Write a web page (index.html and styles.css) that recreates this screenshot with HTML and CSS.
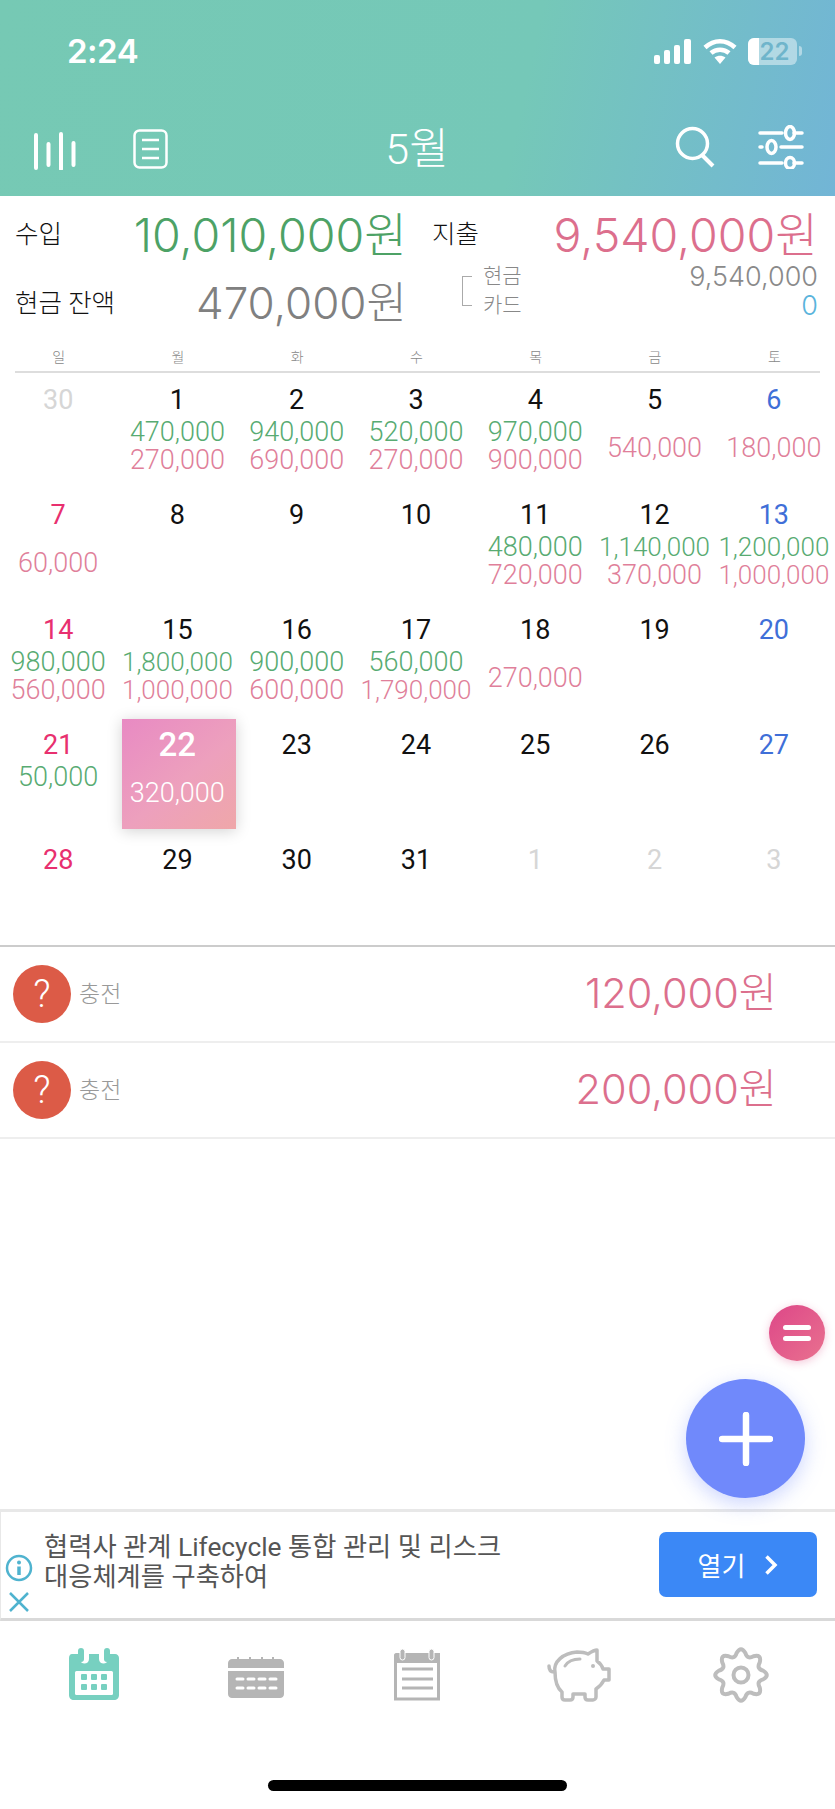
FILE: index.html
```html
<!DOCTYPE html>
<html lang="ko">
<head>
<meta charset="utf-8">
<title>가계부</title>
<link rel="stylesheet" href="styles.css">
</head>
<body>
<div class="app">
  <header class="top">
    <div class="status">
      <span class="time">2:24</span>
      <div class="status-icons">
        <svg class="sig" width="37" height="25" viewBox="0 0 37 25"><rect x="0" y="16" width="6" height="9" rx="2"/><rect x="10" y="11" width="6" height="14" rx="2"/><rect x="20" y="6" width="6" height="19" rx="2"/><rect x="30" y="0" width="7" height="25" rx="2"/></svg>
        <svg class="wifi" width="34" height="26" viewBox="0 0 34 26"><path d="M2 9.500C11 1 23 1 32 9.500M8 15C13 10.500 21 10.500 26 15" fill="none" stroke="#fff" stroke-width="4.500"/><path d="M11.500 19.500C15 17 19 17 22.500 19.500L17 26Z" fill="#fff"/></svg>
        <div class="batt"><div class="batt-fill"></div><span class="batt-text">22</span></div><div class="batt-nub"></div>
      </div>
    </div>
    <nav class="nav">
      <div class="nav-side">
        <svg class="nav-bars" width="44" height="38" viewBox="0 0 44 38"><path d="M3 3V36M15.500 12V33M28 2V37M40.500 11V33" fill="none" stroke="#fff" stroke-width="4" stroke-linecap="round"/></svg>
        <svg class="nav-doc" width="35" height="40" viewBox="0 0 35 40"><rect x="1.500" y="1.500" width="32" height="37" rx="5" fill="none" stroke="#fff" stroke-width="2.500"/><path d="M9 11H26M9 20H26M9 29H26" stroke="#fff" stroke-width="2.500"/></svg>
      </div>
      <h1 class="month">5월</h1>
      <div class="nav-side">
        <svg class="nav-search" width="42" height="42" viewBox="0 0 42 42"><circle cx="17.500" cy="17.500" r="15" fill="none" stroke="#fff" stroke-width="3.500"/><path d="M27 29L38 40" stroke="#fff" stroke-width="4"/></svg>
        <svg class="nav-sliders" width="46" height="44" viewBox="0 0 46 44" fill="none" stroke="#fff" stroke-width="3.500" stroke-linecap="round"><path d="M2 8H24M36 8H44M2 22H4M23 22H44M2 38H24M36 38H44"/><ellipse cx="32" cy="8" rx="4.500" ry="6.500"/><ellipse cx="13.500" cy="22" rx="4.500" ry="6.500"/><ellipse cx="32" cy="38" rx="4.500" ry="5.500"/></svg>
      </div>
    </nav>
  </header>

  <section class="summary">
    <div class="sum-col">
      <div class="sum-row sum-first"><span class="label">수입</span><span class="big green">10,010,000원</span></div>
      <div class="sum-row"><span class="label">현금 잔액</span><span class="big gray">470,000원</span></div>
    </div>
    <div class="sum-col">
      <div class="sum-row sum-first"><span class="label">지출</span><span class="big pink">9,540,000원</span></div>
      <div class="breakdown">
        <div class="bracket"></div>
        <div class="bd-names"><span>현금</span><span>카드</span></div>
        <div class="bd-vals"><span>9,540,000</span><span class="blue">0</span></div>
      </div>
    </div>
  </section>

  <div class="weekdays"><span>일</span><span>월</span><span>화</span><span>수</span><span>목</span><span>금</span><span>토</span></div>
  <div class="week-rule"></div>

  <section class="cal">
    <div class="cell"><b class="num mute">30</b></div>
    <div class="cell"><b class="num">1</b><div class="vals"><span class="g">470,000</span><span class="p">270,000</span></div></div>
    <div class="cell"><b class="num">2</b><div class="vals"><span class="g">940,000</span><span class="p">690,000</span></div></div>
    <div class="cell"><b class="num">3</b><div class="vals"><span class="g">520,000</span><span class="p">270,000</span></div></div>
    <div class="cell"><b class="num">4</b><div class="vals"><span class="g">970,000</span><span class="p">900,000</span></div></div>
    <div class="cell"><b class="num">5</b><div class="vals mid"><span class="p">540,000</span></div></div>
    <div class="cell"><b class="num sat">6</b><div class="vals mid"><span class="p">180,000</span></div></div>

    <div class="cell"><b class="num sun">7</b><div class="vals mid"><span class="p">60,000</span></div></div>
    <div class="cell"><b class="num">8</b></div>
    <div class="cell"><b class="num">9</b></div>
    <div class="cell"><b class="num">10</b></div>
    <div class="cell"><b class="num">11</b><div class="vals"><span class="g">480,000</span><span class="p">720,000</span></div></div>
    <div class="cell"><b class="num">12</b><div class="vals"><span class="g long">1,140,000</span><span class="p">370,000</span></div></div>
    <div class="cell"><b class="num sat">13</b><div class="vals"><span class="g long">1,200,000</span><span class="p long">1,000,000</span></div></div>

    <div class="cell"><b class="num sun">14</b><div class="vals"><span class="g">980,000</span><span class="p">560,000</span></div></div>
    <div class="cell"><b class="num">15</b><div class="vals"><span class="g long">1,800,000</span><span class="p long">1,000,000</span></div></div>
    <div class="cell"><b class="num">16</b><div class="vals"><span class="g">900,000</span><span class="p">600,000</span></div></div>
    <div class="cell"><b class="num">17</b><div class="vals"><span class="g">560,000</span><span class="p long">1,790,000</span></div></div>
    <div class="cell"><b class="num">18</b><div class="vals mid"><span class="p">270,000</span></div></div>
    <div class="cell"><b class="num">19</b></div>
    <div class="cell"><b class="num sat">20</b></div>

    <div class="cell"><b class="num sun">21</b><div class="vals"><span class="g">50,000</span></div></div>
    <div class="cell today"><b class="num">22</b><div class="vals mid"><span>320,000</span></div></div>
    <div class="cell"><b class="num">23</b></div>
    <div class="cell"><b class="num">24</b></div>
    <div class="cell"><b class="num">25</b></div>
    <div class="cell"><b class="num">26</b></div>
    <div class="cell"><b class="num sat">27</b></div>

    <div class="cell"><b class="num sun">28</b></div>
    <div class="cell"><b class="num">29</b></div>
    <div class="cell"><b class="num">30</b></div>
    <div class="cell"><b class="num">31</b></div>
    <div class="cell"><b class="num mute">1</b></div>
    <div class="cell"><b class="num mute">2</b></div>
    <div class="cell"><b class="num mute">3</b></div>
  </section>

  <section class="list">
    <div class="item"><div class="qmark">?</div><span class="item-name">충전</span><span class="item-amt">120,000원</span></div>
    <div class="item"><div class="qmark">?</div><span class="item-name">충전</span><span class="item-amt">200,000원</span></div>
  </section>

  <div class="spacer"></div>

  <section class="ad">
    <div class="ad-marks">
      <svg width="28" height="28" viewBox="0 0 28 28"><circle cx="14" cy="14" r="12" fill="none" stroke="#4fb3cf" stroke-width="2.500"/><circle cx="14" cy="8.500" r="2" fill="#4fb3cf"/><path d="M14 12.500V21" stroke="#4fb3cf" stroke-width="3.500"/></svg>
      <svg width="22" height="22" viewBox="0 0 22 22"><path d="M2 2L20 20M20 2L2 20" stroke="#4fb3cf" stroke-width="2.500"/></svg>
    </div>
    <p class="ad-text">협력사 관계 Lifecycle 통합 관리 및 리스크<br>대응체계를 구축하여</p>
    <div class="ad-btn"><span>열기</span><svg width="14" height="22" viewBox="0 0 14 22"><path d="M2.500 2.500L11 11L2.500 19.500" fill="none" stroke="#fff" stroke-width="3.500"/></svg></div>
  </section>

  <footer class="tabbar">
    <div class="tabs">
      <svg class="tab" width="50" height="54" viewBox="0 0 50 54"><path fill="#77d0c0" d="M3 7H11V12C11 18 20 18 20 12V7H30V12C30 18 39 18 39 12V7H46C48.500 7 50 9 50 11V48C50 51 48 53 45 53H5C2 53 0 51 0 48V11C0 9 1 7 3 7Z"/><rect x="9" y="1" width="6" height="14" rx="3" fill="#77d0c0"/><rect x="35" y="1" width="6" height="14" rx="3" fill="#77d0c0"/><rect x="6" y="24" width="38" height="24" rx="1.500" fill="#fff"/><g fill="#77d0c0"><rect x="12" y="27" width="6" height="6" rx="1"/><rect x="22" y="27" width="6" height="6" rx="1"/><rect x="32" y="27" width="6" height="6" rx="1"/><rect x="12" y="37" width="6" height="6" rx="1"/><rect x="22" y="37" width="6" height="6" rx="1"/><rect x="32" y="37" width="6" height="6" rx="1"/></g></svg>
      <svg class="tab tab-wide" width="56" height="42" viewBox="0 0 56 42"><path fill="#b5b5b5" d="M4 2H52C54 2 56 4 56 6V11H0V6C0 4 2 2 4 2ZM0 14H56V37C56 39.500 54 41 52 41H4C2 41 0 39.500 0 37Z"/><path d="M10 0V3M22 0V3M34 0V3M45 0V3" stroke="#b5b5b5" stroke-width="2"/><path d="M9 22H15M20 22H26M31 22H37M42 22H48M9 31H15M20 31H26M31 31H37M42 31H48" stroke="#fff" stroke-width="3" stroke-linecap="round"/></svg>
      <svg class="tab tab-note" width="46" height="52" viewBox="0 0 46 52"><path fill="#b5b5b5" d="M2 4H46V14H0V6C0 5 1 4 2 4Z"/><path d="M1.500 8V50H44.500V8" fill="none" stroke="#b5b5b5" stroke-width="3"/><path d="M8 20H39M8 30H39M8 39H39" stroke="#b5b5b5" stroke-width="3"/><rect x="6" y="0" width="5" height="11" rx="2.500" fill="#b5b5b5" stroke="#fff"/><rect x="35" y="0" width="5" height="11" rx="2.500" fill="#b5b5b5" stroke="#fff"/></svg>
      <svg class="tab" width="64" height="56" viewBox="0 0 64 56"><path fill="none" stroke="#bdbdbd" stroke-width="3.500" stroke-linejoin="round" stroke-linecap="round" d="M2 19C2 23 4 25 7 25M8 25C6 15 16 6 30 5C35 5 39 6 41 7C44 5 47 3 50 3V14C53 16 55 19 56 22H62V33H57C55 37 52 40 49 42V50C49 52 47 53 46 53H41C39 53 38 52 38 50V47H26V50C26 52 25 53 23 53H18C16 53 15 52 15 50V45C9 40 8 32 8 25Z"/><path d="M18 19C21 14 27 12 33 12" fill="none" stroke="#bdbdbd" stroke-width="3" stroke-linecap="round"/><circle cx="46" cy="19" r="2" fill="#bdbdbd"/></svg>
      <svg class="tab" width="56" height="56" viewBox="0 0 56 56"><path fill="none" stroke="#bdbdbd" stroke-width="4" d="M50.070 23.610Q57.500 28 50.070 32.390Q43.240 34.310 46.710 40.500Q48.860 48.860 40.500 46.710Q34.310 43.240 32.390 50.070Q28 57.500 23.610 50.070Q21.690 43.240 15.500 46.710Q7.140 48.860 9.290 40.500Q12.760 34.310 5.930 32.390Q-1.500 28 5.930 23.610Q12.760 21.690 9.290 15.500Q7.140 7.140 15.500 9.290Q21.690 12.760 23.610 5.930Q28 -1.500 32.390 5.930Q34.310 12.760 40.500 9.290Q48.860 7.140 46.710 15.500Q43.240 21.690 50.070 23.610Z"/><circle cx="28" cy="28" r="7.500" fill="none" stroke="#bdbdbd" stroke-width="4"/></svg>
    </div>
    <div class="home"></div>
  </footer>

  <button class="fab-eq" aria-label="합계"><span></span><span></span></button>
  <button class="fab-add" aria-label="추가"><svg width="54" height="54" viewBox="0 0 54 54"><path d="M27 3V51M3 27H51" stroke="#fff" stroke-width="6.500" stroke-linecap="round"/></svg></button>
</div>
</body>
</html>
```
FILE: styles.css
```css
* { box-sizing: border-box; }
html, body { margin: 0; padding: 0; background: #fff; }
body { font-family: Roboto, "Noto Sans CJK KR", sans-serif; font-weight: 300; color: #111; }
.app { position: relative; width: 835px; height: 1809px; overflow: hidden; display: flex; flex-direction: column; background: #fff; }

.top { height: 196px; flex: none; background: linear-gradient(102deg, #76c9b4 0%, #75c8b8 62%, #72b5d6 100%); color: #fff; }
.status { height: 106px; padding: 36px 33px 0 67px; display: flex; justify-content: space-between; align-items: flex-start; }
.time { font-family: Inter, sans-serif; font-weight: 600; font-size: 33px; line-height: 30px; letter-spacing: -0.5px; }
.status-icons { display: flex; align-items: flex-start; padding-top: 2px; }
.sig { fill: #fff; margin-right: 12px; margin-top: 1px; }
.wifi { margin-right: 11px; }
.batt { position: relative; width: 49px; height: 27px; border-radius: 6px; background: rgba(255,255,255,.45); overflow: hidden; }
.batt-fill { width: 11px; height: 100%; background: #fff; }
.batt-text { position: absolute; inset: 0 0 0 4px; text-align: center; font-family: Inter, sans-serif; font-weight: 600; font-size: 24px; line-height: 27px; color: #6fb5cb; }
.batt-nub { width: 3px; height: 10px; margin-top: 8px; margin-left: 2px; border-radius: 0 3px 3px 0; background: rgba(255,255,255,.45); }

.nav { height: 90px; padding: 0 31px 0 33px; display: flex; justify-content: space-between; align-items: flex-start; }
.nav-side { display: flex; align-items: flex-start; }
.nav-bars { margin-top: 26px; margin-right: 56px; }
.nav-doc { margin-top: 23px; }
.nav-search { margin-top: 20px; margin-right: 41px; }
.nav-sliders { margin-top: 19px; }
.month { margin: 0 9px 0 0; padding-top: 20px; font-weight: 300; font-size: 43px; line-height: 46px; }

.summary { height: 144px; flex: none; padding: 10px 17px 0 15px; display: flex; gap: 25px; }
.sum-col { display: flex; flex-direction: column; }
.sum-col:first-child { width: 392px; }
.sum-col:last-child { flex: 1; }
.sum-row { display: flex; justify-content: space-between; align-items: center; height: 50px; }
.sum-first { margin-bottom: 19px; }
.label { font-size: 25.500px; font-weight: 300; color: #111; }
.big { font-family: Inter, "Noto Sans CJK KR", sans-serif; font-size: 46.500px; white-space: nowrap; }
.green { color: #4da266; }
.pink { color: #dc6f8d; }
.big.gray { color: #808080; font-size: 44px; }
.breakdown { display: flex; margin-top: -13px; height: 62px; }
.bracket { width: 10px; height: 30px; margin: 14px 11px 0 30px; border: 1px solid #aaa; border-right: 0; }
.bd-names, .bd-vals { display: flex; flex-direction: column; }
.bd-names span { font-size: 21px; line-height: 29px; height: 29px; color: #888; }
.bd-vals { flex: 1; align-items: flex-end; }
.bd-vals span { font-family: Inter, sans-serif; font-size: 27px; line-height: 29px; height: 29px; color: #8a8a8a; }
.bd-vals .blue { color: #5ab4dc; }

.weekdays { flex: none; height: 31px; padding-top: 9px; margin-left: -1px; width: 835px; display: grid; grid-template-columns: repeat(7, 1fr); }
.weekdays span { text-align: center; font-size: 14px; line-height: 16px; color: #888; }
.week-rule { flex: none; height: 2px; margin: 0 15px; background: #ddd; }

.cal { flex: none; margin-left: -1.500px; width: 835px; height: 572px; display: grid; grid-template-columns: repeat(7, 1fr); grid-auto-rows: 114.900px; }
.cell { display: flex; flex-direction: column; align-items: center; padding-top: 11px; }
.num { font-weight: 400; font-size: 27px; line-height: 32px; color: #111; }
.mute { color: #d6d6d6; }
.sat { color: #3f6fd8; }
.sun { color: #e8306f; }
.vals { display: flex; flex-direction: column; align-items: center; height: 56px; margin-top: 2px; font-size: 27px; line-height: 28px; white-space: nowrap; }
.vals.mid { justify-content: center; padding-top: 4px; }
.long { font-size: 26px; }
.g { color: #58ab72; }
.p { color: #e07f9a; }
.today { align-self: start; height: 110px; width: 114px; margin: 1px 0 0 4px; padding: 10px 3px 0 0; background: linear-gradient(140deg, #e88ac3 0%, #eda0bd 55%, #efa7a9 100%); box-shadow: 0 2px 14px rgba(0,0,0,.18); color: #fff; }
.today .num { color: #fff; font-weight: 500; font-size: 33px; }
.today .vals { color: #fff; }

.list { flex: none; border-top: 2px solid #ccc; }
.item { height: 96px; padding: 0 58px 0 13px; border-bottom: 2px solid #eee; display: flex; align-items: center; }
.qmark { width: 58px; height: 58px; border-radius: 50%; background: #dc5b47; color: #fff; font-size: 38px; line-height: 58px; text-align: center; }
.item-name { margin: 0 0 4px 8px; font-size: 23px; color: #999; }
.item-amt { font-family: Inter, "Noto Sans CJK KR", sans-serif; margin: 0 0 8px auto; font-size: 41.500px; color: #dc6f8d; }

.spacer { flex: 1; }

.ad { flex: none; height: 112px; border-top: 3px solid #e8e8e8; border-bottom: 3px solid #d9d9d9; border-left: 1px solid #e8e8e8; display: flex; padding: 20px 18px 0 3px; }
.ad-marks { width: 40px; flex: none; display: flex; flex-direction: column; align-items: flex-start; gap: 9px; padding-top: 22px; padding-left: 1px; }
.ad-marks svg:last-child { margin-left: 3px; }
.ad-text { margin: 0; font-weight: 400; font-size: 26.300px; line-height: 30px; color: #555; white-space: nowrap; }
.ad-btn { margin-left: auto; width: 158px; height: 65px; border-radius: 7px; background: #3b88f6; color: #fff; display: flex; align-items: center; justify-content: center; gap: 19px; font-size: 26px; font-weight: 400; }

.tabbar { flex: none; height: 188px; }
.tabs { height: 159px; padding: 26px 13px 0; display: grid; grid-template-columns: repeat(5, 1fr); justify-items: center; align-items: start; }
.tab { display: block; }
.tab-wide { margin-top: 10px; }
.tab-note { margin-top: 2px; }
.home { width: 299px; height: 11px; margin: 0 auto; border-radius: 6px; background: #000; }

.fab-eq { position: absolute; left: 769px; top: 1305px; width: 56px; height: 56px; padding: 0; border: 0; border-radius: 50%; background: linear-gradient(135deg, #dd4788, #e9718f); box-shadow: 0 2px 8px rgba(220,70,130,.3); display: flex; flex-direction: column; align-items: center; justify-content: center; gap: 6px; }
.fab-eq span { width: 28px; height: 5px; border-radius: 3px; background: #fff; }
.fab-add { position: absolute; left: 686px; top: 1379px; width: 119px; height: 119px; padding: 0; border: 0; border-radius: 50%; background: #7089fb; box-shadow: 0 6px 20px rgba(112,137,251,.35); display: flex; align-items: center; justify-content: center; }
```
